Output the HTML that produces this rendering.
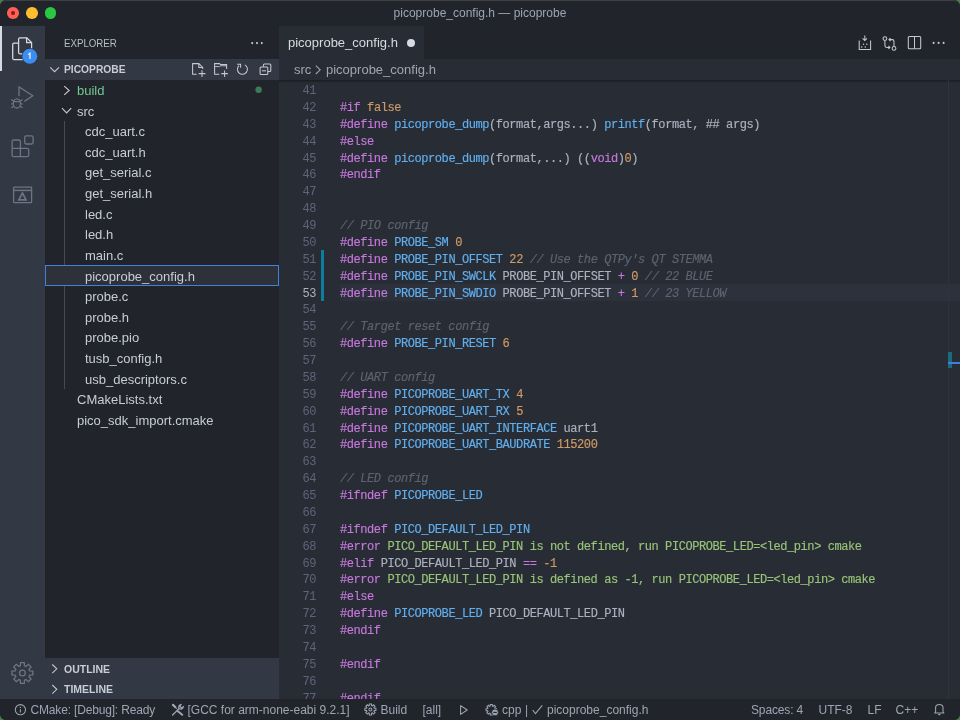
<!DOCTYPE html>
<html><head><meta charset="utf-8"><title>picoprobe_config.h</title>
<style>
html,body{margin:0;padding:0;width:960px;height:720px;overflow:hidden;background:#4c7f4d;}
*{box-sizing:border-box;}
#win{will-change:transform;position:absolute;left:0;top:0;width:960px;height:720px;border-radius:6px;overflow:hidden;background:#282c34;font-family:"Liberation Sans",sans-serif;}
.abs{position:absolute;}
.ico{position:absolute;overflow:visible;}
#title{position:absolute;left:0;top:0;width:960px;height:26.25px;background:#21252b;}
#title .t{position:absolute;left:0;width:960px;top:0;height:26.25px;line-height:26.25px;text-align:center;font-size:12px;color:#9da5b4;}
.tl{position:absolute;top:7.4px;width:11.6px;height:11.6px;border-radius:50%;}
#act{position:absolute;left:0;top:26.25px;width:45px;height:673px;background:#323844;}
#side{position:absolute;left:45px;top:26.25px;width:233.7px;height:673px;background:#21252b;}
#edit{position:absolute;left:278.7px;top:26.25px;width:681.3px;height:673px;background:#282c34;}
#status{position:absolute;left:0;top:699.3px;width:960px;height:20.7px;background:#21252b;}
.st{position:absolute;top:0.75px;height:20.7px;line-height:20.7px;font-size:12px;color:#9da5b4;white-space:pre;}
.hdr{position:absolute;font-size:10.4px;color:#c8ccd4;white-space:pre;}
.tname{position:absolute;height:20.625px;line-height:20.625px;font-size:13px;color:#c8ccd4;white-space:pre;}
.tname.git{color:#73c991;}
.selrow{position:absolute;left:45px;width:233.7px;height:20.625px;background:#2c313a;border:1px solid #3f80e0;}
.ln{-webkit-text-stroke:0.16px currentColor;position:absolute;left:340px;height:16.875px;line-height:16.875px;font-family:"Liberation Mono",monospace;font-size:12px;letter-spacing:-0.428px;color:#abb2bf;white-space:pre;}
.num{position:absolute;left:280px;width:36px;text-align:right;height:16.875px;line-height:16.875px;font-family:"Liberation Mono",monospace;font-size:12px;letter-spacing:-0.428px;color:#5d6579;white-space:pre;}
.num.act{color:#abb2bf;}
.k{color:#c678dd;}
.f{color:#61afef;}
.n{color:#d19a66;}
.s{color:#98c379;}
.c{color:#5c6370;font-style:italic;}
</style></head><body>
<div id="win">
<!-- title bar -->
<div id="title">
  <div class="tl" style="left:7.3px;background:#ff5f57;"></div>
  <div class="abs" style="left:11.2px;top:11.2px;width:3.8px;height:3.8px;border-radius:50%;background:#8c1a14;"></div>
  <div class="tl" style="left:26.1px;background:#febc2e;"></div>
  <div class="tl" style="left:44.8px;background:#28c840;"></div>
  <div class="t">picoprobe_config.h — picoprobe</div>
</div>

<!-- activity bar -->
<div id="act">
  <div class="abs" style="left:0;top:0;width:2px;height:44.7px;background:#d7dae0;"></div>
</div>

<!-- sidebar -->
<div id="side"></div>
<div class="hdr" style="left:64px;top:37.4px;font-size:10.6px;transform:scaleX(0.915);transform-origin:0 0;color:#b8bcc4;">EXPLORER</div>
<div class="abs" style="left:45px;top:59.06px;width:233.7px;height:20.63px;background:#323844;"></div>
<div class="hdr" style="left:64px;top:64px;font-weight:bold;font-size:10.25px;">PICOPROBE</div>
<div class="abs" style="left:63.7px;top:121px;width:1px;height:268px;background:#474a50;"></div>
<div class="tname git" style="top:80.990px;left:77px">build</div>
<svg class="ico" style="left:62px;top:84.690px" width="10" height="11" viewBox="0 0 10 11"><path d="M2.2 1.2 L7.2 5.5 L2.2 9.8" fill="none" stroke="#c5c8ce" stroke-width="1.1"/></svg>
<div class="tname" style="top:101.615px;left:77px">src</div>
<svg class="ico" style="left:61px;top:106.315px" width="12" height="10" viewBox="0 0 12 10"><path d="M1 2.2 L5.6 7 L10.2 2.2" fill="none" stroke="#c5c8ce" stroke-width="1.1"/></svg>
<div class="tname" style="top:122.240px;left:85px">cdc_uart.c</div>
<div class="tname" style="top:142.865px;left:85px">cdc_uart.h</div>
<div class="tname" style="top:163.490px;left:85px">get_serial.c</div>
<div class="tname" style="top:184.115px;left:85px">get_serial.h</div>
<div class="tname" style="top:204.740px;left:85px">led.c</div>
<div class="tname" style="top:225.365px;left:85px">led.h</div>
<div class="tname" style="top:245.990px;left:85px">main.c</div>
<div class="selrow" style="top:265.315px"></div>
<div class="tname" style="top:266.615px;left:85px">picoprobe_config.h</div>
<div class="tname" style="top:287.240px;left:85px">probe.c</div>
<div class="tname" style="top:307.865px;left:85px">probe.h</div>
<div class="tname" style="top:328.490px;left:85px">probe.pio</div>
<div class="tname" style="top:349.115px;left:85px">tusb_config.h</div>
<div class="tname" style="top:369.740px;left:85px">usb_descriptors.c</div>
<div class="tname" style="top:390.365px;left:77px">CMakeLists.txt</div>
<div class="tname" style="top:410.990px;left:77px">pico_sdk_import.cmake</div>
<div class="abs" style="left:45px;top:657.8px;width:233.7px;height:41.5px;background:#323844;"></div>
<div class="hdr" style="left:64px;top:662.5px;font-weight:bold;font-size:10.5px;">OUTLINE</div>
<div class="hdr" style="left:64px;top:683px;font-weight:bold;font-size:10.5px;">TIMELINE</div>

<!-- editor -->
<div id="edit"></div>
<div class="abs" style="left:278.7px;top:26.25px;width:681.3px;height:32.8px;background:#21252b;"></div>
<div class="abs" style="left:278.7px;top:26.25px;width:145.7px;height:32.8px;background:#282c34;"></div>
<div class="abs" style="left:288px;top:34px;font-size:13px;color:#d7dae0;white-space:pre;line-height:17px;">picoprobe_config.h</div>
<div class="abs" style="left:407px;top:39px;width:8px;height:8px;border-radius:50%;background:#d7dae0;"></div>
<div class="abs" style="left:294px;top:61px;font-size:13px;color:#a0a6b0;white-space:pre;line-height:17px;">src</div>
<div class="abs" style="left:326px;top:61px;font-size:13px;color:#a0a6b0;white-space:pre;line-height:17px;">picoprobe_config.h</div>

<!-- current line -->
<div class="abs" style="left:340px;top:284.17px;width:620px;height:16.875px;background:#2c313c;"></div>
<!-- git gutter -->
<div class="abs" style="left:320.5px;top:250.4px;width:3.2px;height:50.6px;background:#0c7d9d;"></div>
<div class="num" style="top:83.000px">41</div>
<div class="num" style="top:99.875px">42</div>
<div class="num" style="top:116.750px">43</div>
<div class="num" style="top:133.625px">44</div>
<div class="num" style="top:150.500px">45</div>
<div class="num" style="top:167.375px">46</div>
<div class="num" style="top:184.250px">47</div>
<div class="num" style="top:201.125px">48</div>
<div class="num" style="top:218.000px">49</div>
<div class="num" style="top:234.875px">50</div>
<div class="num" style="top:251.750px">51</div>
<div class="num" style="top:268.625px">52</div>
<div class="num act" style="top:285.500px">53</div>
<div class="num" style="top:302.375px">54</div>
<div class="num" style="top:319.250px">55</div>
<div class="num" style="top:336.125px">56</div>
<div class="num" style="top:353.000px">57</div>
<div class="num" style="top:369.875px">58</div>
<div class="num" style="top:386.750px">59</div>
<div class="num" style="top:403.625px">60</div>
<div class="num" style="top:420.500px">61</div>
<div class="num" style="top:437.375px">62</div>
<div class="num" style="top:454.250px">63</div>
<div class="num" style="top:471.125px">64</div>
<div class="num" style="top:488.000px">65</div>
<div class="num" style="top:504.875px">66</div>
<div class="num" style="top:521.750px">67</div>
<div class="num" style="top:538.625px">68</div>
<div class="num" style="top:555.500px">69</div>
<div class="num" style="top:572.375px">70</div>
<div class="num" style="top:589.250px">71</div>
<div class="num" style="top:606.125px">72</div>
<div class="num" style="top:623.000px">73</div>
<div class="num" style="top:639.875px">74</div>
<div class="num" style="top:656.750px">75</div>
<div class="num" style="top:673.625px">76</div>
<div class="num" style="top:690.500px">77</div>
<div class="ln" style="top:83.000px"></div>
<div class="ln" style="top:99.875px"><span class="k">#if</span> <span class="n">false</span></div>
<div class="ln" style="top:116.750px"><span class="k">#define</span> <span class="f">picoprobe_dump</span>(format,args...) <span class="f">printf</span>(format, ## args)</div>
<div class="ln" style="top:133.625px"><span class="k">#else</span></div>
<div class="ln" style="top:150.500px"><span class="k">#define</span> <span class="f">picoprobe_dump</span>(format,...) ((<span class="k">void</span>)<span class="n">0</span>)</div>
<div class="ln" style="top:167.375px"><span class="k">#endif</span></div>
<div class="ln" style="top:184.250px"></div>
<div class="ln" style="top:201.125px"></div>
<div class="ln" style="top:218.000px"><span class="c">// PIO config</span></div>
<div class="ln" style="top:234.875px"><span class="k">#define</span> <span class="f">PROBE_SM</span> <span class="n">0</span></div>
<div class="ln" style="top:251.750px"><span class="k">#define</span> <span class="f">PROBE_PIN_OFFSET</span> <span class="n">22</span> <span class="c">// Use the QTPy&#x27;s QT STEMMA</span></div>
<div class="ln" style="top:268.625px"><span class="k">#define</span> <span class="f">PROBE_PIN_SWCLK</span> PROBE_PIN_OFFSET <span class="k">+</span> <span class="n">0</span> <span class="c">// 22 BLUE</span></div>
<div class="ln" style="top:285.500px"><span class="k">#define</span> <span class="f">PROBE_PIN_SWDIO</span> PROBE_PIN_OFFSET <span class="k">+</span> <span class="n">1</span> <span class="c">// 23 YELLOW</span></div>
<div class="ln" style="top:302.375px"></div>
<div class="ln" style="top:319.250px"><span class="c">// Target reset config</span></div>
<div class="ln" style="top:336.125px"><span class="k">#define</span> <span class="f">PROBE_PIN_RESET</span> <span class="n">6</span></div>
<div class="ln" style="top:353.000px"></div>
<div class="ln" style="top:369.875px"><span class="c">// UART config</span></div>
<div class="ln" style="top:386.750px"><span class="k">#define</span> <span class="f">PICOPROBE_UART_TX</span> <span class="n">4</span></div>
<div class="ln" style="top:403.625px"><span class="k">#define</span> <span class="f">PICOPROBE_UART_RX</span> <span class="n">5</span></div>
<div class="ln" style="top:420.500px"><span class="k">#define</span> <span class="f">PICOPROBE_UART_INTERFACE</span> uart1</div>
<div class="ln" style="top:437.375px"><span class="k">#define</span> <span class="f">PICOPROBE_UART_BAUDRATE</span> <span class="n">115200</span></div>
<div class="ln" style="top:454.250px"></div>
<div class="ln" style="top:471.125px"><span class="c">// LED config</span></div>
<div class="ln" style="top:488.000px"><span class="k">#ifndef</span> <span class="f">PICOPROBE_LED</span></div>
<div class="ln" style="top:504.875px"></div>
<div class="ln" style="top:521.750px"><span class="k">#ifndef</span> <span class="f">PICO_DEFAULT_LED_PIN</span></div>
<div class="ln" style="top:538.625px"><span class="k">#error</span> <span class="s">PICO_DEFAULT_LED_PIN is not defined, run PICOPROBE_LED=&lt;led_pin&gt; cmake</span></div>
<div class="ln" style="top:555.500px"><span class="k">#elif</span> PICO_DEFAULT_LED_PIN <span class="k">==</span> <span class="n">-1</span></div>
<div class="ln" style="top:572.375px"><span class="k">#error</span> <span class="s">PICO_DEFAULT_LED_PIN is defined as -1, run PICOPROBE_LED=&lt;led_pin&gt; cmake</span></div>
<div class="ln" style="top:589.250px"><span class="k">#else</span></div>
<div class="ln" style="top:606.125px"><span class="k">#define</span> <span class="f">PICOPROBE_LED</span> PICO_DEFAULT_LED_PIN</div>
<div class="ln" style="top:623.000px"><span class="k">#endif</span></div>
<div class="ln" style="top:639.875px"></div>
<div class="ln" style="top:656.750px"><span class="k">#endif</span></div>
<div class="ln" style="top:673.625px"></div>
<div class="ln" style="top:690.500px"><span class="k">#endif</span></div>
<!-- scroll shadow -->
<div class="abs" style="left:278.7px;top:79.69px;width:681.3px;height:3px;background:linear-gradient(#191c21,rgba(40,44,52,0));"></div>
<!-- overview ruler -->
<div class="abs" style="left:947.5px;top:79.69px;width:1px;height:619.6px;background:#2f333b;"></div>
<div class="abs" style="left:947.5px;top:352px;width:4px;height:16px;background:#1c6a80;"></div>
<div class="abs" style="left:947.5px;top:362px;width:12.5px;height:2px;background:#3f7fe0;"></div>

<!-- status bar -->
<div id="status">
  <div class="st" style="left:30.5px;letter-spacing:-0.17px;">CMake: [Debug]: Ready</div>
  <div class="st" style="left:187.5px;">[GCC for arm-none-eabi 9.2.1]</div>
  <div class="st" style="left:380.5px;">Build</div>
  <div class="st" style="left:422.5px;">[all]</div>
  <div class="st" style="left:502px;">cpp</div>
  <div class="st" style="left:525px;">|</div>
  <div class="st" style="left:547px;">picoprobe_config.h</div>
  <div class="st" style="left:751px;letter-spacing:-0.15px;">Spaces: 4</div>
  <div class="st" style="left:818.5px;">UTF-8</div>
  <div class="st" style="left:867.5px;">LF</div>
  <div class="st" style="left:895.5px;">C++</div>
</div>
<svg class="ico" style="left:0;top:0" width="960" height="720" viewBox="0 0 960 720" fill="none" stroke-linecap="butt" stroke-linejoin="miter">
<g stroke="#d7dae0" stroke-width="1.25">
<path d="M18.6 39 Q18.6 37.8 19.8 37.8 L26.8 37.8 L31.6 42.6 L31.6 52.6 Q31.6 53.8 30.4 53.8 L19.8 53.8 Q18.6 53.8 18.6 52.6 Z"/>
<path d="M26.6 37.8 L26.6 42.6 L31.6 42.6"/>
<path d="M18.6 43.2 L13.9 43.2 Q12.7 43.2 12.7 44.4 L12.7 58.3 Q12.7 59.5 13.9 59.5 L25 59.5"/>
</g>
<circle cx="29.8" cy="56.2" r="8.1" fill="#323844"/>
<circle cx="29.8" cy="56.2" r="7.5" fill="#3b8df2"/>
<path d="M28.2 54.6 L30 53.2 L30 59" stroke="#ffffff" stroke-width="1.1"/>
<g stroke="#6e7483" stroke-width="1.3">
<path d="M19 96.2 L19 86.9 L32.8 95.8 L24.4 101.4"/>
<ellipse cx="16.9" cy="103.4" rx="3.6" ry="4.6"/>
<path d="M13.4 101.6 L20.4 101.6 M11.3 99.6 L13.6 101 M22.5 99.6 L20.2 101 M11.2 103.8 L13.3 103.8 M22.6 103.8 L20.5 103.8 M11.3 107.8 L13.6 106.4 M22.5 107.8 L20.2 106.4"/>
</g>
<g stroke="#6e7483" stroke-width="1.3">
<path d="M20.4 148.3 L20.4 141.5 Q20.4 140 18.9 140 L13.6 140 Q12.1 140 12.1 141.5 L12.1 155.2 Q12.1 156.7 13.6 156.7 L27.2 156.7 Q28.7 156.7 28.7 155.2 L28.7 149.8 Q28.7 148.3 27.2 148.3 L12.1 148.3 M20.4 148.3 L20.4 156.7"/>
<rect x="24.7" y="135.8" width="8.4" height="8.2" rx="1.5"/>
</g>
<g stroke="#6e7483" stroke-width="1.3">
<rect x="13.6" y="187.2" width="18" height="15.4" rx="0.6"/>
<path d="M13.6 190.4 L31.6 190.4" stroke-width="1.5"/>
<path d="M22.4 193 L26 199.9 L18.8 199.9 Z" stroke-width="1.7"/>
</g>
<path d="M20.33 665.79 L20.56 662.56 L24.24 662.56 L24.47 665.79 L26.04 666.44 L28.48 664.32 L31.08 666.92 L28.96 669.36 L29.61 670.93 L32.84 671.16 L32.84 674.84 L29.61 675.07 L28.96 676.64 L31.08 679.08 L28.48 681.68 L26.04 679.56 L24.47 680.21 L24.24 683.44 L20.56 683.44 L20.33 680.21 L18.76 679.56 L16.32 681.68 L13.72 679.08 L15.84 676.64 L15.19 675.07 L11.96 674.84 L11.96 671.16 L15.19 670.93 L15.84 669.36 L13.72 666.92 L16.32 664.32 L18.76 666.44 Z" stroke="#6e7483" stroke-width="1.3"/>
<circle cx="22.4" cy="673" r="2.9" stroke="#6e7483" stroke-width="1.3"/>
<circle cx="252.2" cy="43.1" r="1.05" fill="#c5c8ce"/>
<circle cx="257" cy="43.1" r="1.05" fill="#c5c8ce"/>
<circle cx="261.8" cy="43.1" r="1.05" fill="#c5c8ce"/>
<g stroke="#c5c8ce" stroke-width="1.05">
<path d="M196.7 74.3 L192.6 74.3 L192.6 63.6 L198.8 63.6 L202.7 67.4 L202.7 69"/>
<path d="M198.8 63.6 L198.8 67.4 L202.7 67.4"/>
<path d="M202 70.2 L202 76.9 M198.7 73.6 L205.4 73.6"/>
<path d="M219.3 74.3 L214.6 74.3 L214.6 63.6 L219.5 63.6 L220.6 64.6 L226.6 64.6 L226.6 69"/>
<path d="M214.6 66.6 L219.4 66.6 L220.6 65.8 L226.6 65.8" stroke-width="0.9"/>
<path d="M224.6 70.4 L224.6 77 M221.3 73.6 L227.9 73.6"/>
<path d="M244.8 64.9 A5 5 0 1 1 239.1 65.6"/>
<path d="M237.1 64.3 L240.6 64.3 L240.6 67.7"/>
<path d="M263.4 66.8 L263.4 65 Q263.4 64 264.4 64 L269.8 64 Q270.8 64 270.8 65 L270.8 70.5 Q270.8 71.5 269.8 71.5 L267.9 71.5"/>
<rect x="260.1" y="67" width="7.7" height="7.5" rx="1"/>
<path d="M261.9 70.8 L266 70.8"/>
</g>
<path d="M50.2 67.3 L54.6 71.7 L59 67.3" stroke="#c5c8ce" stroke-width="1.05"/>
<path d="M52.3 664.5 L56.8 668.8 L52.3 673.1 M52.3 685 L56.8 689.3 L52.3 693.6" stroke="#c5c8ce" stroke-width="1.05"/>
<circle cx="258.6" cy="89.8" r="3.2" fill="#3d7a5c"/>
<path d="M315.8 65.6 L320.2 69.8 L315.8 74" stroke="#a0a6b0" stroke-width="1.05"/>
<g stroke="#c5c8ce" stroke-width="1.05">
<path d="M859.2 40.6 L859.2 49.4 L870.6 49.4 L870.6 40.6"/>
<path d="M864.8 35.6 L864.8 40.6 M862.6 38.4 L864.8 40.6 L867 38.4"/>
</g>
<circle cx="863.5" cy="44.2" r="0.75" fill="#c5c8ce"/>
<circle cx="866.9" cy="44.2" r="0.75" fill="#c5c8ce"/>
<circle cx="861.6" cy="46.9" r="0.75" fill="#c5c8ce"/>
<circle cx="865.3" cy="46.9" r="0.75" fill="#c5c8ce"/>
<g stroke="#c5c8ce" stroke-width="1.05">
<circle cx="884.9" cy="38.6" r="1.9"/>
<circle cx="894" cy="48.4" r="1.9"/>
<path d="M884.9 40.5 L884.9 45.5 Q884.9 47.4 886.8 47.4 L889.6 47.4 M888.4 45.9 L889.9 47.4 L888.4 48.9"/>
<path d="M894 46.5 L894 41.5 Q894 39.6 892.1 39.6 L889.3 39.6 M890.5 38.1 L889 39.6 L890.5 41.1"/>
<rect x="908.3" y="36.5" width="12.4" height="12.3" rx="1"/>
<path d="M914.5 36.5 L914.5 48.8"/>
</g>
<circle cx="933.6" cy="42.9" r="1.05" fill="#c5c8ce"/>
<circle cx="938.6" cy="42.9" r="1.05" fill="#c5c8ce"/>
<circle cx="943.6" cy="42.9" r="1.05" fill="#c5c8ce"/>
<g stroke="#9da5b4" stroke-width="1.05">
<circle cx="20.4" cy="709.7" r="5.1"/>
<path d="M20.4 709.3 L20.4 712.6"/>
</g>
<circle cx="20.4" cy="707.4" r="0.7" fill="#9da5b4"/>
<g stroke="#9da5b4" stroke-width="1.3" stroke-linecap="round">
<path d="M172.6 715 L179 708.6"/>
<path d="M173 704.9 L175.4 707.3" stroke-width="2.2"/><path d="M175.4 707.3 L177.4 709.3" stroke-width="1"/><path d="M177.6 711 L182.2 714.8" stroke-width="2"/>
</g>
<path d="M179 708.6 A2.8 2.8 0 0 1 181 704.5 L180 706.6 L181.3 707.9 L183.4 706.9 A2.8 2.8 0 0 1 179 708.6" stroke="#9da5b4" stroke-width="1.2"/>
<path d="M369.23 705.57 L369.33 703.90 L371.47 703.90 L371.57 705.57 L372.28 705.87 L373.53 704.76 L375.04 706.27 L373.93 707.52 L374.23 708.23 L375.90 708.33 L375.90 710.47 L374.23 710.57 L373.93 711.28 L375.04 712.53 L373.53 714.04 L372.28 712.93 L371.57 713.23 L371.47 714.90 L369.33 714.90 L369.23 713.23 L368.52 712.93 L367.27 714.04 L365.76 712.53 L366.87 711.28 L366.57 710.57 L364.90 710.47 L364.90 708.33 L366.57 708.23 L366.87 707.52 L365.76 706.27 L367.27 704.76 L368.52 705.87 Z" stroke="#9da5b4" stroke-width="1.05"/>
<circle cx="370.4" cy="709.4" r="1.5" stroke="#9da5b4" stroke-width="1.05"/>
<path d="M460.6 705.6 L460.6 714.4 L467.2 710 Z" stroke="#9da5b4" stroke-width="1.05" stroke-linejoin="round"/>
<path d="M490.19 706.07 L490.29 704.50 L492.31 704.50 L492.41 706.07 L493.08 706.34 L494.26 705.31 L495.69 706.74 L494.66 707.92 L494.93 708.59 L496.50 708.69 L496.50 710.71 L494.93 710.81 L494.66 711.48 L495.69 712.66 L494.26 714.09 L493.08 713.06 L492.41 713.33 L492.31 714.90 L490.29 714.90 L490.19 713.33 L489.52 713.06 L488.34 714.09 L486.91 712.66 L487.94 711.48 L487.67 710.81 L486.10 710.71 L486.10 708.69 L487.67 708.59 L487.94 707.92 L486.91 706.74 L488.34 705.31 L489.52 706.34 Z" stroke="#9da5b4" stroke-width="1.05"/>
<circle cx="495" cy="712.4" r="3.4" fill="#9da5b4" stroke="#21252b" stroke-width="0.8"/>
<path d="M493.2 712.4 L496.8 712.4" stroke="#21252b" stroke-width="1.1"/>
<path d="M532.7 710 L535.4 713.6 L542.3 705.4" stroke="#9da5b4" stroke-width="1.05"/>
<path d="M934.6 713 L935.6 712 L935.6 707.5 Q935.6 704.4 939.3 704.4 Q943 704.4 943 707.5 L943 712 L944 713 Z" stroke="#9da5b4" stroke-width="1.05" stroke-linejoin="round"/>
<path d="M938.2 714.6 L940.4 714.6" stroke="#9da5b4" stroke-width="1.2"/>
</svg>
<div class="abs" style="left:0;top:0;width:960px;height:720px;border-radius:6px;box-shadow:inset 0 1px 0 rgba(255,255,255,0.12);"></div>
</div>
</body></html>
